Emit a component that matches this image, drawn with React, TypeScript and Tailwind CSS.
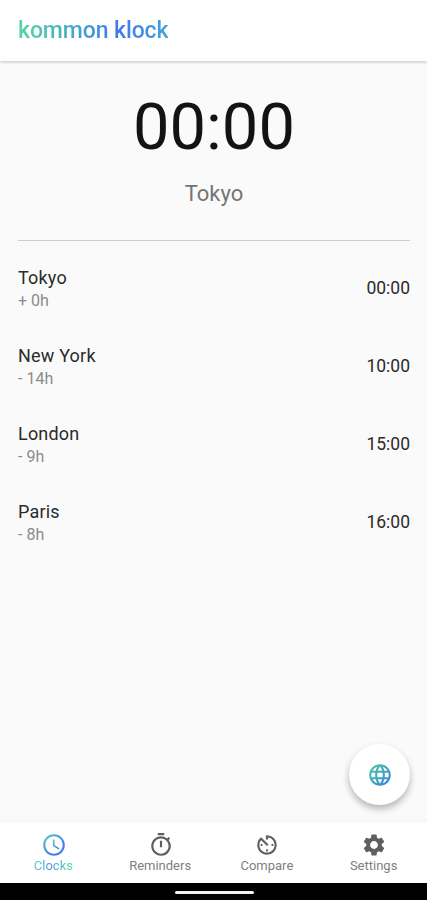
import React from 'react'
import { MdAccessTime, MdAvTimer, MdLanguage, MdOutlineTimer, MdSettings } from 'react-icons/md'

const clocks = [
  { city: 'Tokyo', offset: '+ 0h', time: '00:00' },
  { city: 'New York', offset: '- 14h', time: '10:00' },
  { city: 'London', offset: '- 9h', time: '15:00' },
  { city: 'Paris', offset: '- 8h', time: '16:00' },
]

const tabs = [
  { label: 'Clocks', icon: MdAccessTime },
  { label: 'Reminders', icon: MdOutlineTimer },
  { label: 'Compare', icon: MdAvTimer },
  { label: 'Settings', icon: MdSettings },
]

// Gradients shared by the coloured icons
const Gradients = () => (
  <svg className="absolute size-0" aria-hidden="true">
    <defs>
      <linearGradient id="clock-gradient" x1="0" y1="0" x2="0.7" y2="0.7">
        <stop offset="0" stopColor="#56cfc0" />
        <stop offset="1" stopColor="#427eea" />
      </linearGradient>
      <linearGradient id="globe-gradient" x1="0" y1="0" x2="1" y2="1">
        <stop offset="0" stopColor="#4fcea0" />
        <stop offset="1" stopColor="#397fe0" />
      </linearGradient>
    </defs>
  </svg>
)

const ClockRow = ({ city, offset, time }: (typeof clocks)[number]) => (
  <li className="flex h-[78px] items-center justify-between">
    <div className="pt-[2px]">
      <div className="text-[18px] leading-[22px] tracking-[0.2px] text-[#2b2b2b]">{city}</div>
      <div className="pt-px text-[16px] leading-[22px] text-[#8b8b8b]">{offset}</div>
    </div>
    <div className="text-[17.5px] leading-[22px] text-[#2b2b2b]">{time}</div>
  </li>
)

const App = () => {
  return (
    <div className="relative flex h-[900px] w-[427px] flex-col overflow-hidden bg-[#fafafa] font-['Roboto',sans-serif]">
      <Gradients />

      <header className="flex h-[61px] shrink-0 items-center bg-white px-[18px] shadow-[0_2px_2px_rgba(0,0,0,0.14)]">
        <h1 className="bg-linear-to-r from-[#58d6a0] via-[#4178e8] via-68% to-[#46a3d8] bg-clip-text text-[23px] leading-7 font-medium tracking-[-0.1px] text-transparent">
          kommon klock
        </h1>
      </header>

      <main className="flex-1 pr-[17px] pl-[18px]">
        <section className="flex flex-col items-center border-b border-[#cccccc] pt-[28px] pb-[33px]">
          <div className="text-[65px] leading-[76px] text-[#131313]">00:00</div>
          <div className="mt-[16px] text-[22px] leading-[26px] text-[#747474]">Tokyo</div>
        </section>
        <ul className="pt-[8px]">
          {clocks.map((clock) => (
            <ClockRow key={clock.city} {...clock} />
          ))}
        </ul>
      </main>

      <button
        aria-label="Add city"
        className="absolute right-[17px] bottom-[95px] flex size-[61px] items-center justify-center rounded-full bg-white shadow-[0_4px_7px_rgba(0,0,0,0.28)]"
      >
        <MdLanguage size={26} fill="url(#globe-gradient)" />
      </button>

      <nav className="flex h-[61px] shrink-0 bg-white shadow-[0_-1px_2px_rgba(0,0,0,0.04)]">
        {tabs.map(({ label, icon: Icon }, i) => (
          <button key={label} className="flex flex-1 flex-col items-center pt-[10px] text-[#5f5f5f]">
            <Icon size={26} className="ml-px" fill={i === 0 ? 'url(#clock-gradient)' : 'currentColor'} />
            <span
              className={
                i === 0
                  ? 'bg-linear-to-r from-[#58cdb8] via-[#4d94e6] via-40% to-[#58dba8] bg-clip-text text-[13px] leading-4 text-transparent'
                  : 'text-[13px] leading-4 text-[#808080]'
              }
            >
              {label}
            </span>
          </button>
        ))}
      </nav>

      <div className="flex h-[17px] shrink-0 justify-center bg-black pt-[8px] pl-px">
        <div className="h-[3px] w-[79px] rounded-full bg-[#f2f2f2]" />
      </div>
    </div>
  )
}

export default App
